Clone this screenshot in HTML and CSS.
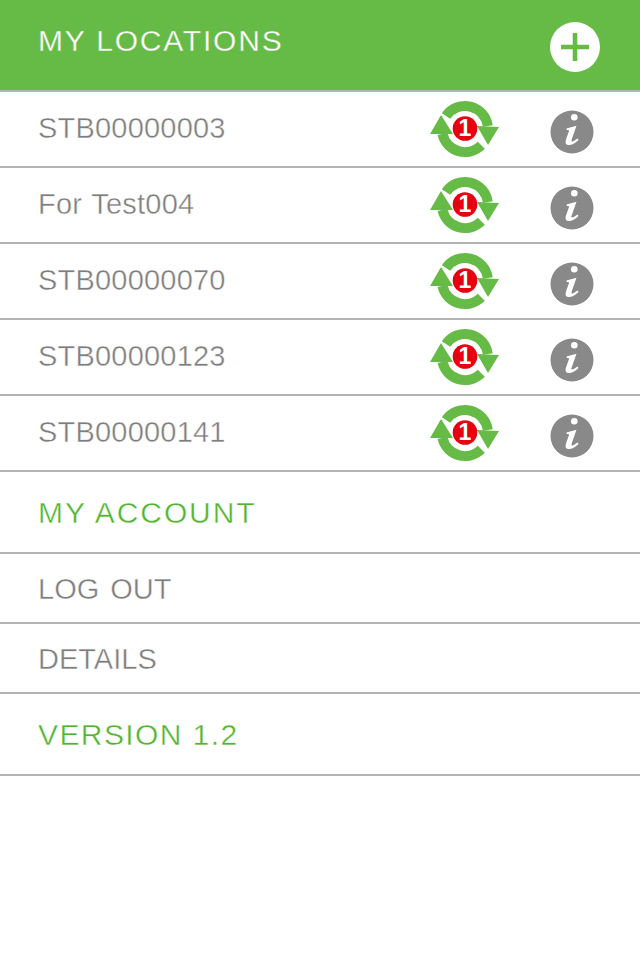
FILE: index.html
```html
<!DOCTYPE html>
<html lang="en">
<head>
<meta charset="utf-8">
<title>My Locations</title>
<link rel="stylesheet" href="styles.css">
</head>
<body>
<svg class="defs" width="0" height="0" aria-hidden="true">
  <symbol id="sync" viewBox="0 0 70 58">
    <path d="M16 16 A23 23 0 0 1 57.800 26" fill="none" stroke="#66bb46" stroke-width="10"/>
    <path d="M51.300 45.300 A23 23 0 0 1 12.500 33.900" fill="none" stroke="#66bb46" stroke-width="10"/>
    <path d="M0 34 L11 15 L23 34 Z" fill="#66bb46"/>
    <path d="M47 26 L69 27 L58 45 Z" fill="#66bb46"/>
    <circle cx="35" cy="28.500" r="12.300" fill="#e60012"/>
  </symbol>
  <symbol id="info" viewBox="0 0 44 44">
    <circle cx="22" cy="22" r="21.500" fill="#898989"/>
    <circle cx="24.300" cy="7.300" r="3.300" fill="#fff"/>
    <path d="M16.500 18.500 L26.500 15.700 L21.500 30 C21 32.500 23 32 27.500 28.500 L28.500 30 C24 34.500 20 35.500 18 35 C15.500 34.500 15.200 32 16 29.500 L19 21 C19.300 19.800 18 19.800 16.800 20 Z" fill="#fff"/>
  </symbol>
</svg>
<main class="menu">
  <header class="row head">
    <h1 class="title">MY LOCATIONS</h1>
    <svg class="add" viewBox="0 0 50 50" aria-label="Add location">
      <circle cx="25" cy="25" r="25" fill="#fff"/>
      <path d="M22.700 11 H27.300 V22.700 H39 V27.300 H27.300 V39 H22.700 V27.300 H11 V22.700 H22.700 Z" fill="#66bb46"/>
    </svg>
  </header>
  <ul class="list">
    <li class="row loc"><span class="label">STB00000003</span><span class="sync-wrap"><svg class="sync"><use href="#sync"/></svg><b class="count">1</b></span><svg class="info"><use href="#info"/></svg></li>
    <li class="row loc"><span class="label">For Test004</span><span class="sync-wrap"><svg class="sync"><use href="#sync"/></svg><b class="count">1</b></span><svg class="info"><use href="#info"/></svg></li>
    <li class="row loc"><span class="label">STB00000070</span><span class="sync-wrap"><svg class="sync"><use href="#sync"/></svg><b class="count">1</b></span><svg class="info"><use href="#info"/></svg></li>
    <li class="row loc"><span class="label">STB00000123</span><span class="sync-wrap"><svg class="sync"><use href="#sync"/></svg><b class="count">1</b></span><svg class="info"><use href="#info"/></svg></li>
    <li class="row loc"><span class="label">STB00000141</span><span class="sync-wrap"><svg class="sync"><use href="#sync"/></svg><b class="count">1</b></span><svg class="info"><use href="#info"/></svg></li>
  </ul>
  <div class="row section account">MY ACCOUNT</div>
  <div class="row item">LOG OUT</div>
  <div class="row item">DETAILS</div>
  <div class="row section version">VERSION 1.2</div>
</main>
</body>
</html>
```
FILE: styles.css
```css
* { box-sizing: border-box; }
html, body { margin: 0; background: #fff; }
body { font-family: "Liberation Sans", Arial, sans-serif; }
.defs { position: absolute; }
.menu { width: 640px; }
.list { list-style: none; margin: 0; padding: 0; }
.row {
  display: flex;
  align-items: center;
  padding-left: 38px;
  border-bottom: 2px solid #b3b3b3;
}
.head {
  height: 92px;
  background: #66bb46;
  justify-content: space-between;
  padding-right: 40px;
  padding-bottom: 8px;
}
.title {
  margin: 0;
  font-size: 30px;
  font-weight: 400;
  letter-spacing: 1.8px;
  color: #fff;
  -webkit-text-stroke: 0.3px #66bb46;
}
.add { width: 50px; height: 50px; margin-top: 12px; }
.loc { height: 76px; color: #7e7e7e; font-size: 29px; }
.label {
  flex: 1;
  padding-top: 2px;
  padding-bottom: 4px;
  letter-spacing: 0.2px;
  word-spacing: 1.5px;
  -webkit-text-stroke: 0.4px #fff;
}
.sync-wrap { position: relative; width: 70px; height: 58px; margin-right: 50px; }
.sync { display: block; width: 70px; height: 58px; }
.count {
  position: absolute;
  left: 22.5px;
  top: 16px;
  width: 25px;
  text-align: center;
  color: #fff;
  font-size: 23px;
  line-height: 25px;
}
.info { width: 44px; height: 44px; margin-right: 46px; margin-top: 6px; }
.section {
  height: 82px;
  padding-top: 2px;
  color: #52b52f;
  font-size: 30px;
  -webkit-text-stroke: 0.4px #fff;
}
.account { letter-spacing: 1.9px; }
.version { letter-spacing: 1.4px; }
.item {
  height: 70px;
  padding-top: 3px;
  color: #7e7e7e;
  font-size: 29px;
  word-spacing: 3px;
  -webkit-text-stroke: 0.4px #fff;
}
```
